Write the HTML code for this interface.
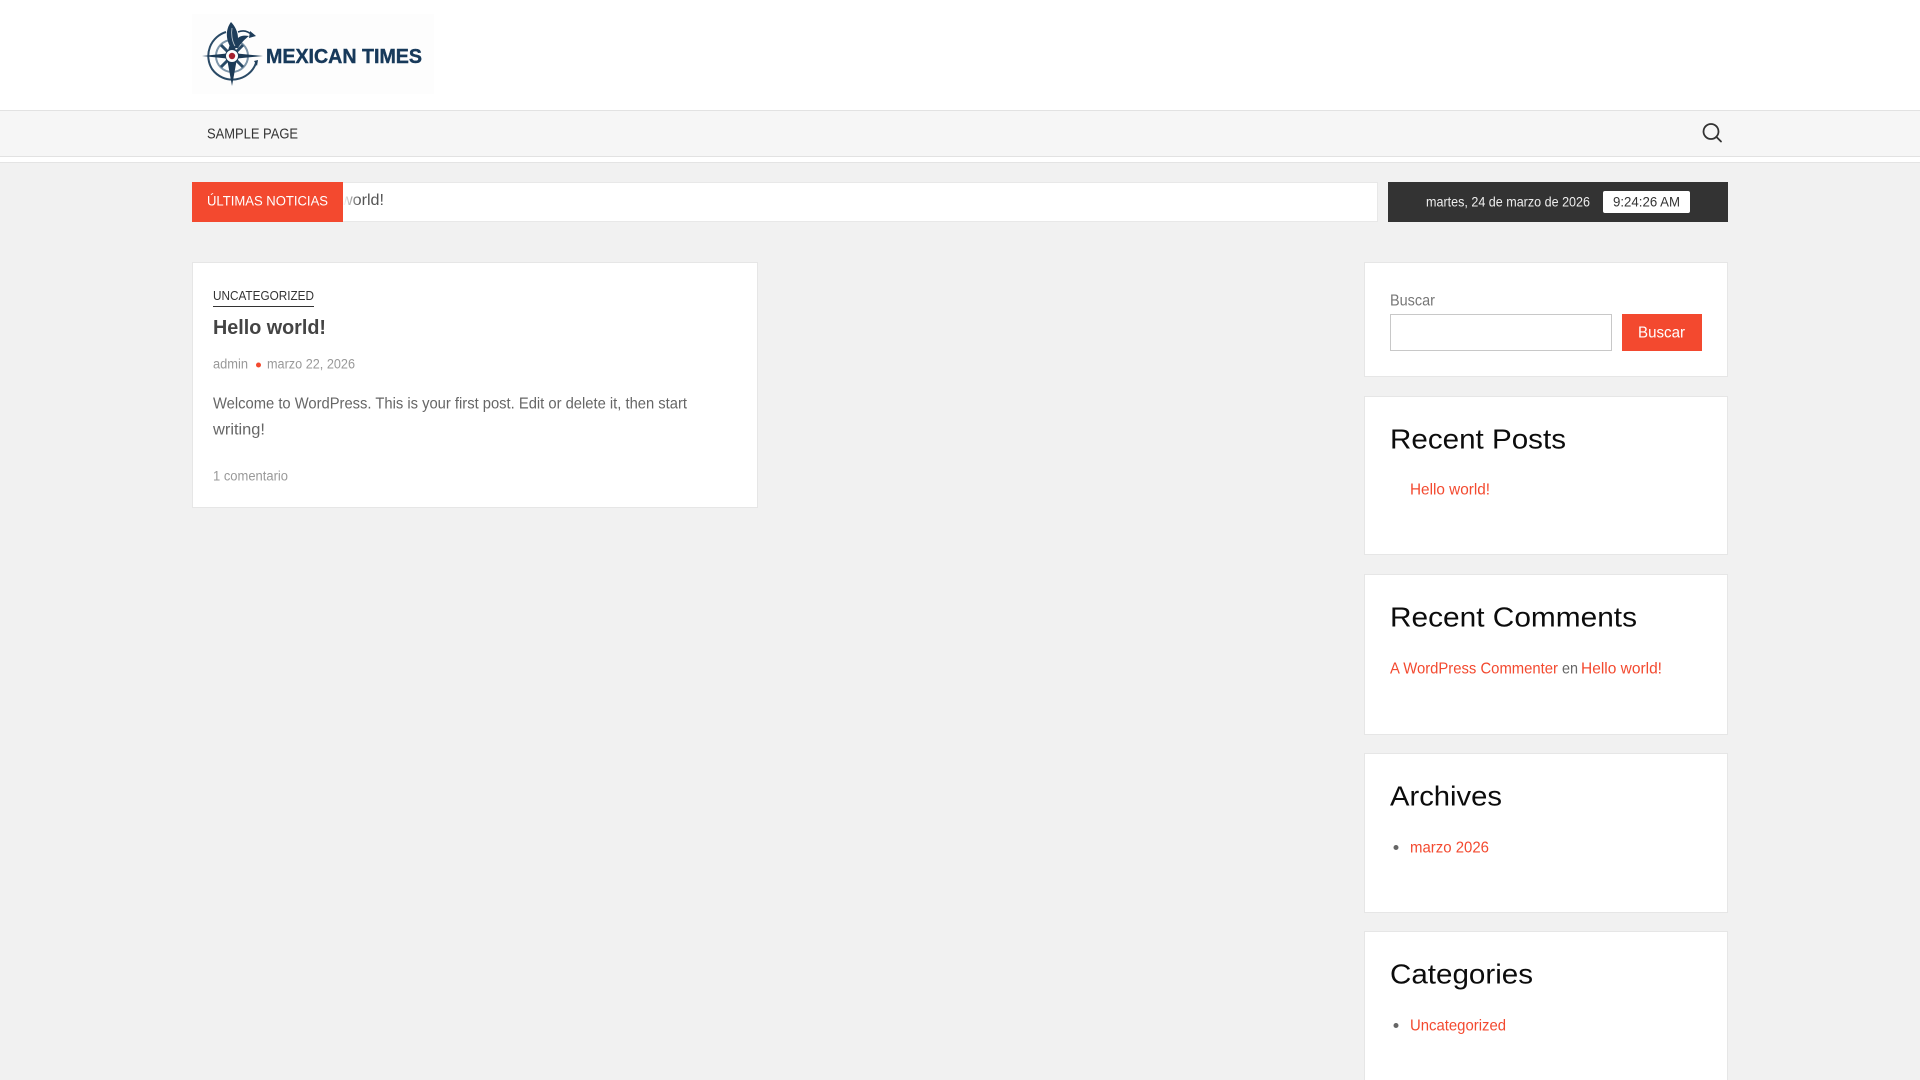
<!DOCTYPE html>
<html lang="es">
<head>
<meta charset="utf-8">
<title>Mexican Times</title>
<style>
html,body{margin:0;padding:0;width:1920px;height:1080px;overflow:hidden;background:#f1f1f1;font-family:"Liberation Sans",sans-serif}
body{position:relative}
.b{position:absolute;box-sizing:border-box}
.card{background:#fff;border:1px solid #e6e6e6}
svg.o{position:absolute;left:0;top:0}
text{font-family:"Liberation Sans",sans-serif}
.lnk{fill:#f3492f;font-size:16px}
.h{fill:#0c0c0c;font-size:28px}
</style>
</head>
<body>
<div class="b" style="left:0;top:0;width:1920px;height:110px;background:#fff"></div>
<div class="b" style="left:0;top:110px;width:1920px;height:47px;background:#f6f6f6;border-top:1px solid #e2e2e2;border-bottom:1px solid #e2e2e2"></div>
<div class="b" style="left:0;top:157px;width:1920px;height:6px;background:#fff;border-bottom:1px solid #e4e4e4"></div>

<div class="b" style="left:192px;top:182px;width:1186px;height:40px;background:#fff;border:1px solid #e8e8e8"></div>
<div class="b" style="left:1388px;top:182px;width:340px;height:40px;background:#333"></div>
<div class="b" style="left:1603px;top:191px;width:87px;height:22px;background:#fff;border-radius:2px"></div>

<div class="b card" style="left:192px;top:262px;width:566px;height:246px"></div>
<div class="b card" style="left:1364px;top:262px;width:364px;height:115px"></div>
<div class="b card" style="left:1364px;top:396px;width:364px;height:159px"></div>
<div class="b card" style="left:1364px;top:574px;width:364px;height:161px"></div>
<div class="b card" style="left:1364px;top:753px;width:364px;height:160px"></div>
<div class="b card" style="left:1364px;top:931px;width:364px;height:149px;border-bottom:none"></div>

<div class="b" style="left:1390px;top:314px;width:222px;height:37px;background:#fff;border:1px solid #c8c8c8"></div>
<div class="b" style="left:1622px;top:314px;width:80px;height:37px;background:#f3492f"></div>

<svg class="o" width="1920" height="1080" viewBox="0 0 1920 1080" xmlns="http://www.w3.org/2000/svg">
<defs>
<linearGradient id="fade" x1="0" x2="1" y1="0" y2="0"><stop offset="0" stop-color="#fff"/><stop offset="1" stop-color="#fff" stop-opacity="0"/></linearGradient>
</defs>

<!-- logo -->
<rect x="192" y="14" width="242" height="80" fill="#fdfdfd"/>
<g fill="none">
<path d="M226 32A25 25 0 0 0 212 69A25 25 0 0 0 256 63" stroke="#2a4a66" stroke-width="2"/>
<circle cx="232" cy="56" r="16" stroke="#7d95a9" stroke-width="2"/>
<path d="M221 45L243 67M243 45L221 67" stroke="#2a4a66" stroke-width="3"/>
</g>
<path d="M202 56L227 53.500L232 38L237 53.500L263 56L237 58.500L232 86L227 58.500Z" fill="#1c3a56"/>
<path d="M231 22C225 30 226 40 231 48L238 48C241 43 245 39 249 36C244 35 240 36 238 38C238 32 235 26 231 22Z" fill="#1e3d5a"/>
<path d="M232 28C231 34 232 41 235 46" stroke="#c5cdd3" stroke-width=".8" fill="none"/>
<path d="M238 32C243 30 248 31 252 35" stroke="#1e3d5a" stroke-width="1.500" fill="none"/>
<path d="M250 31L256 36L249 38Z" fill="#1e3d5a"/>
<path d="M254 61L258 60L257 66Z" fill="#1e3d5a"/>
<circle cx="232" cy="56" r="6.500" fill="#fff" stroke="#1c3a56"/>
<circle cx="232" cy="56" r="3.200" fill="#a5202e"/>
<text x="266" y="63" font-size="20" font-weight="700" fill="#17395a" stroke="#17395a" stroke-width=".4" textLength="156" lengthAdjust="spacingAndGlyphs">MEXICAN TIMES</text>

<!-- nav -->
<a href="#"><text x="207" y="138.500" font-size="14.5" fill="#333" textLength="91" lengthAdjust="spacingAndGlyphs">SAMPLE PAGE</text></a>
<g fill="none" stroke="#333" stroke-width="1.8"><circle cx="1711" cy="131.500" r="7.500"/><path d="M1716.500 137L1721 141.500" stroke-linecap="round"/></g>

<!-- ticker -->
<text x="341" y="205" font-size="16" fill="#555" textLength="43" lengthAdjust="spacingAndGlyphs">world!</text>
<rect x="343" y="186" width="16" height="30" fill="url(#fade)"/>
<rect x="192" y="182" width="151" height="40" fill="#f3492f"/>
<text x="207" y="205.500" font-size="13.5" fill="#fff" textLength="121" lengthAdjust="spacingAndGlyphs">ÚLTIMAS NOTICIAS</text>
<text x="1426" y="206.500" font-size="14" fill="#eee" textLength="164" lengthAdjust="spacingAndGlyphs">martes, 24 de marzo de 2026</text>
<text x="1613" y="206.500" font-size="14" fill="#333" textLength="67" lengthAdjust="spacingAndGlyphs">9:24:26 AM</text>

<!-- post -->
<a href="#"><text x="213" y="300" font-size="13" fill="#333" textLength="101" lengthAdjust="spacingAndGlyphs">UNCATEGORIZED</text></a>
<rect x="213" y="306" width="101" height="1" fill="#333"/>
<a href="#"><text x="213" y="334" font-size="20.5" font-weight="700" fill="#444" textLength="113" lengthAdjust="spacingAndGlyphs">Hello world!</text></a>
<text x="213" y="368.500" font-size="13.5" fill="#999" textLength="35" lengthAdjust="spacingAndGlyphs">admin</text>
<circle cx="258.500" cy="365" r="2.500" fill="#f3492f"/>
<text x="267" y="368.500" font-size="13.5" fill="#999" textLength="88" lengthAdjust="spacingAndGlyphs">marzo 22, 2026</text>
<text x="213" y="408.500" font-size="16" fill="#666" textLength="474" lengthAdjust="spacingAndGlyphs">Welcome to WordPress. This is your first post. Edit or delete it, then start</text>
<text x="213" y="434.500" font-size="16" fill="#666" textLength="52" lengthAdjust="spacingAndGlyphs">writing!</text>
<text x="213" y="480.500" font-size="13.5" fill="#999" textLength="75" lengthAdjust="spacingAndGlyphs">1 comentario</text>

<!-- sidebar -->
<text x="1390" y="305.500" font-size="16" fill="#777" textLength="45" lengthAdjust="spacingAndGlyphs">Buscar</text>
<text x="1638" y="337.500" font-size="16" fill="#fff" textLength="47" lengthAdjust="spacingAndGlyphs">Buscar</text>

<text class="h" x="1390" y="448.500" textLength="176" lengthAdjust="spacingAndGlyphs">Recent Posts</text>
<a href="#"><text class="lnk" x="1410" y="494.500" textLength="80" lengthAdjust="spacingAndGlyphs">Hello world!</text></a>

<text class="h" x="1390" y="626.500" textLength="247" lengthAdjust="spacingAndGlyphs">Recent Comments</text>
<a href="#"><text class="lnk" x="1390" y="673.500" textLength="168" lengthAdjust="spacingAndGlyphs">A WordPress Commenter</text></a>
<text x="1562" y="673.500" font-size="16" fill="#666" textLength="16" lengthAdjust="spacingAndGlyphs">en</text>
<a href="#"><text class="lnk" x="1581" y="673.500" textLength="81" lengthAdjust="spacingAndGlyphs">Hello world!</text></a>

<text class="h" x="1390" y="805.500" textLength="112" lengthAdjust="spacingAndGlyphs">Archives</text>
<circle cx="1396" cy="847.500" r="2.500" fill="#666"/>
<a href="#"><text class="lnk" x="1410" y="852.500" textLength="79" lengthAdjust="spacingAndGlyphs">marzo 2026</text></a>

<text class="h" x="1390" y="983.500" textLength="143" lengthAdjust="spacingAndGlyphs">Categories</text>
<circle cx="1396" cy="1025.500" r="2.500" fill="#666"/>
<a href="#"><text class="lnk" x="1410" y="1030.500" textLength="96" lengthAdjust="spacingAndGlyphs">Uncategorized</text></a>
</svg>
</body>
</html>
